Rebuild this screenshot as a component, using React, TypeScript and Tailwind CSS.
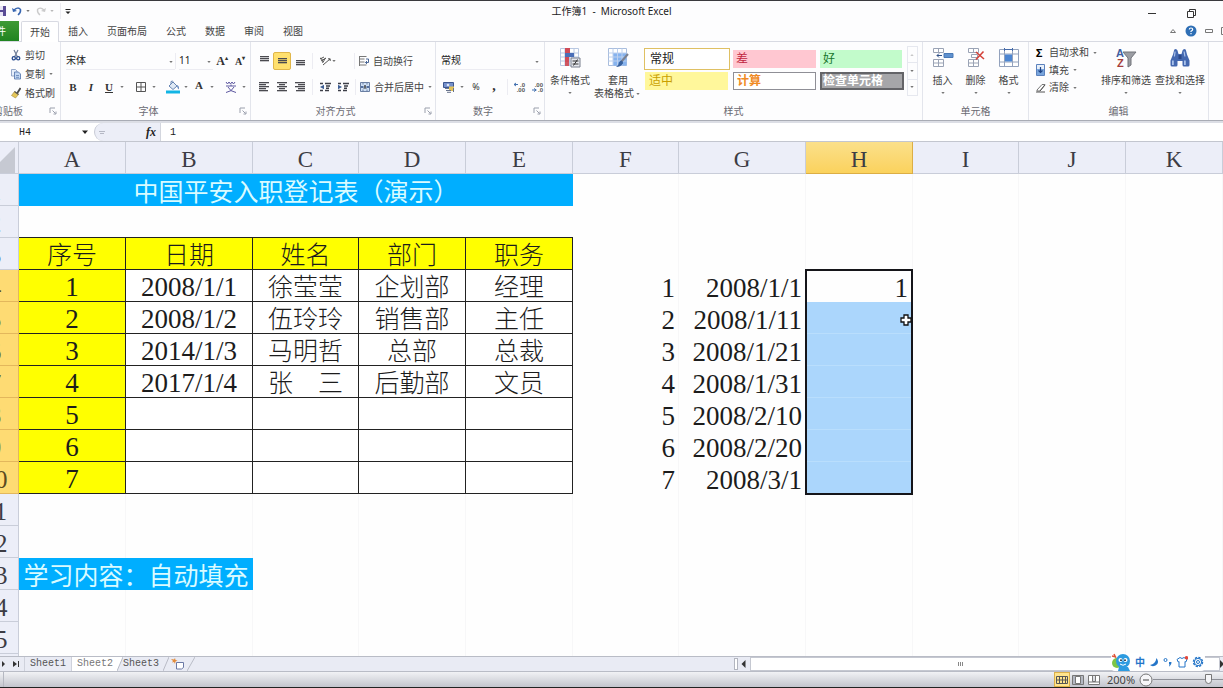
import type { ReactNode } from "react";

const ui = "font-['Noto_Sans','Noto_Sans_CJK_SC',sans-serif]";
const sheetFont = "font-['Liberation_Serif','Noto_Sans_CJK_SC',serif]";

function Dot({ className = "" }: { className?: string }) {
  return (
    <svg viewBox="0 0 8 8" className={`h-2 w-2 shrink-0 fill-[#777] ${className}`} aria-hidden="true">
      <path d="M2.300 3h3.400L4 5z" />
    </svg>
  );
}

function Launcher() {
  return (
    <svg viewBox="0 0 8 8" className="h-2 w-2" fill="none" stroke="#9a9fac" aria-hidden="true">
      <path d="M1 6V1h5M3.5 3.5l3 3M7 4.5V7H4.5" />
    </svg>
  );
}

function Group({ label, width, launcher, children, labelClass = "justify-center" }: { label: string; width: string; launcher?: boolean; children: ReactNode; labelClass?: string }) {
  return (
    <section aria-label={label} className={`flex shrink-0 flex-col border-r border-[#e3e5ec] ${width}`}>
      <div className="h-[61px]">{children}</div>
      <div className={`relative flex h-4 items-center text-[10px] leading-4 text-[#6a6a72] ${labelClass}`}>
        <span className="whitespace-nowrap">{label}</span>
        {launcher && (
          <button aria-label={`${label} 设置`} className="absolute right-[3px] top-1">
            <Launcher />
          </button>
        )}
      </div>
    </section>
  );
}

function Tool({ label, children, className = "" }: { label: string; children: ReactNode; className?: string }) {
  return (
    <button aria-label={label} className={`flex h-[18px] w-[18px] shrink-0 items-center justify-center text-[#333] ${className}`}>
      {children}
    </button>
  );
}

function Sep({ className = "" }: { className?: string }) {
  return <span className={`h-4 w-px shrink-0 bg-[#ececf2] ${className}`} />;
}

function Lines({ rows, y = 2 }: { rows: [number, number][]; y?: number }) {
  return (
    <svg viewBox="0 0 12 12" className="h-3 w-3" aria-hidden="true">
      {rows.map(([x, w], i) => (
        <rect key={i} x={x} y={y + i * 2} width={w} height="1.3" fill="#4a4a50" />
      ))}
    </svg>
  );
}

function Picker({ label, value, width }: { label: string; value: string; width: string }) {
  return (
    <span className={`relative flex h-[18px] items-center border-b border-[#ececf2] ${width}`}>
      <select aria-label={label} className="h-full w-full appearance-none bg-transparent text-[10px] text-[#222]">
        <option>{value}</option>
      </select>
      <Dot className="absolute right-0 top-1.5" />
    </span>
  );
}

function BigButton({ lines, width, arrow = "below", children }: { lines: string[]; width: string; arrow?: "below" | "inline"; children: ReactNode }) {
  return (
    <button className={`flex shrink-0 flex-col items-center pt-1 text-[10px] leading-[13px] text-[#444] ${width}`}>
      <span className="mb-1 flex h-6 items-center">{children}</span>
      <span className="whitespace-nowrap">{lines[0]}</span>
      {arrow === "below" ? (
        <Dot className="mt-0.5" />
      ) : (
        <span className="flex items-center whitespace-nowrap">
          {lines[1]}
          <Dot />
        </span>
      )}
    </button>
  );
}

function Indent({ flip }: { flip?: boolean }) {
  return (
    <svg viewBox="0 0 12 12" className="h-3 w-3" aria-hidden="true">
      <path d="M1 2.5h3M6 2.5h6M7 5h4M7 7.2h3M1 9.5h3M6 9.5h4" stroke="#3d3f48" strokeWidth="1.4" />
      <path d={flip ? "M1 3.8L5 6L1 8.2z" : "M5 3.8L1 6l4 2.2z"} fill="#3f5f95" />
    </svg>
  );
}

function Decimals({ top, bottom, left }: { top: string; bottom: string; left?: boolean }) {
  return (
    <svg viewBox="0 0 13 12" className="h-3 w-[13px]" aria-hidden="true">
      <text x="12" y="5.5" textAnchor="end" fontSize="6" fontWeight="700" fontFamily="Liberation Sans" fill="#555">{top}</text>
      <text x="12" y="11" textAnchor="end" fontSize="6" fontWeight="700" fontFamily="Liberation Sans" fill="#555">{bottom}</text>
      <path d={left ? "M1 3.5h4M3 2L1 3.5L3 5" : "M1 9h4M3 7.5L5.300 9L3 10.500"} fill="none" stroke="#4572b0" />
    </svg>
  );
}

function Clipboard() {
  return (
    <Group label="剪贴板" width="w-[61px]" launcher labelClass="justify-start -ml-[7px] mr-0">
      <div className="flex flex-col gap-px pl-[11px] pt-[4px] text-[10px] text-[#444]">
        <button className="flex h-[18px] items-center gap-1">
          <svg viewBox="0 0 10 12" className="h-3 w-2.5" fill="none" aria-hidden="true">
            <path d="M3 1l3.500 7M7 1L3.500 8" stroke="#6f7d98" strokeWidth="1.2" />
            <circle cx="2.800" cy="9.300" r="1.600" stroke="#274b8e" strokeWidth="1.300" />
            <circle cx="7.200" cy="9.300" r="1.600" stroke="#274b8e" strokeWidth="1.300" />
          </svg>
          剪切
        </button>
        <button className="flex h-[18px] items-center gap-1">
          <svg viewBox="0 0 10 12" className="h-3 w-2.5" aria-hidden="true">
            <path d="M.5 1.500h4l1.500 1.500v5h-5.500z" fill="#e7effa" stroke="#7d95bd" strokeWidth=".8" />
            <path d="M3.500 4h4l2 2v5h-6z" fill="#c3d8f3" stroke="#4f71a8" strokeWidth=".8" />
            <path d="M5 7.500h3M5 9.300h3" stroke="#4f71a8" strokeWidth=".7" />
          </svg>
          复制
          <Dot className="-ml-0.5" />
        </button>
        <button className="flex h-[18px] items-center gap-1 whitespace-nowrap">
          <svg viewBox="0 0 10 12" className="h-3 w-2.5" aria-hidden="true">
            <path d="M9.500 1L6 6.500" stroke="#4a4a4a" strokeWidth="1.800" />
            <path d="M3.500 4.500l4 3-3 3.500-4-2.500z" fill="#e5c75a" stroke="#a38a35" strokeWidth=".6" />
            <path d="M3.500 4.500l4 3" stroke="#555" strokeWidth="1.300" />
          </svg>
          格式刷
        </button>
      </div>
    </Group>
  );
}

function FontGroup() {
  return (
    <Group label="字体" width="w-[190px]" launcher labelClass="justify-center pr-[14px]">
      <div className="flex items-center pl-[5px] pt-[10px]">
        <Picker label="字体" value="宋体" width="w-[109px]" />
        <Sep className="mr-[3px]" />
        <Picker label="字号" value="11" width="w-[34px]" />
        <Tool label="增大字号" className="font-['Liberation_Serif'] text-[12px] font-bold">A<sup className="text-[6px]">▴</sup></Tool>
        <Tool label="减小字号" className="font-['Liberation_Serif'] text-[10px] font-bold">A<sup className="text-[6px]">▾</sup></Tool>
      </div>
      <div className="flex items-center pl-[3px] pt-[8px] font-['Liberation_Serif']">
        <Tool label="加粗" className="text-[11px] font-bold">B</Tool>
        <Tool label="倾斜" className="text-[11px] font-bold italic">I</Tool>
        <Tool label="下划线" className="text-[11px] font-bold underline">U</Tool>
        <Dot className="mr-[6px]" />
        <Tool label="边框">
          <svg viewBox="0 0 12 12" className="h-3 w-3" fill="none" stroke="#555" aria-hidden="true"><path d="M1.500 1.500h9v9h-9zM6 1.500v9M1.500 6h9" /></svg>
        </Tool>
        <Dot className="mr-[6px]" />
        <Tool label="填充颜色">
          <svg viewBox="0 0 14 14" className="h-3.5 w-3.5" aria-hidden="true">
            <path d="M3 6l4-4 4 4-4 3.500z" fill="#dfe9f5" stroke="#6685b3" />
            <path d="M5 4V1.500q1.500-1 2.500.500" fill="none" stroke="#6685b3" />
            <path d="M11 5q2.500 1 1.500 4.500Q11.500 8 11 5z" fill="#2e5fa8" />
            <path d="M0 10.500h14v3H0z" fill="#12b5e5" />
          </svg>
        </Tool>
        <Dot />
        <Tool label="字体颜色" className="pb-1 text-[11px] font-bold text-[#3d4f75]">A</Tool>
        <Dot className="mr-[6px]" />
        <Tool label="拼音">
          <svg viewBox="0 0 12 13" className="h-3.5 w-3" fill="none" stroke="#5d58a0" aria-hidden="true"><path d="M1 1.500l1.500 2L4 1.500l1.500 2L7 1.500l1.500 2L10 1.500M1 5.500h10M6 4v1.500M3 6.500Q5 11 11 12M9 6.500Q7 11 1 12" /></svg>
        </Tool>
        <Dot />
      </div>
    </Group>
  );
}

const left: [number, number][] = [[1, 10], [1, 7], [1, 10], [1, 7], [1, 9]];
const center: [number, number][] = [[1, 10], [3, 6], [1, 10], [3, 6], [1, 10]];
const right: [number, number][] = [[1, 10], [4, 7], [1, 10], [4, 7], [2, 9]];
const bars: [number, number][] = [[2, 9], [2, 9], [2, 9]];

function AlignGroup() {
  return (
    <Group label="对齐方式" width="w-[185px]" launcher labelClass="justify-center pr-[15px]">
      <div className="flex items-center pl-1 pt-[10px]">
        <Tool label="顶端对齐"><Lines rows={bars} y={1} /></Tool>
        <Tool label="垂直居中" className="rounded-xs border border-[#e0b64a] bg-[#ffe06e]"><Lines rows={bars} y={3} /></Tool>
        <Tool label="底端对齐"><Lines rows={bars} y={5} /></Tool>
        <Sep className="ml-[3px] mr-[3px]" />
        <Tool label="方向">
          <svg viewBox="0 0 12 12" className="h-3 w-3" fill="none" stroke="#555" aria-hidden="true">
            <path d="M1 4l4-2M2 6l5-3M3.500 8l3-5M4 10l7-6M9 3.800h2.200V6M1 3q2 0 3 4" />
          </svg>
        </Tool>
        <Dot className="-ml-1" />
        <Sep className="ml-[16px] mr-[4px]" />
        <button className="flex h-[18px] items-center gap-1 text-[10px] text-[#444]">
          <svg viewBox="0 0 10 12" className="h-3 w-2.5" fill="none" aria-hidden="true">
            <path d="M.5 1.500h7M.5 4h5M.5 7h5M.5 10h7M.5 1v10" stroke="#777" /><path d="M7 4h2.500v3.500H6.500M8 6L6.500 7.500L8 9" stroke="#4b6796" />
          </svg>
          自动换行
        </button>
      </div>
      <div className="flex items-center pl-1 pt-[8px]">
        <Tool label="左对齐"><Lines rows={left} y={1} /></Tool>
        <Tool label="居中"><Lines rows={center} y={1} /></Tool>
        <Tool label="右对齐"><Lines rows={right} y={1} /></Tool>
        <Sep className="ml-[3px] mr-[3px]" />
        <Tool label="减少缩进量"><Indent /></Tool>
        <Tool label="增加缩进量"><Indent flip /></Tool>
        <Sep className="ml-[3px] mr-[4px]" />
        <button className="flex h-[18px] items-center gap-1 whitespace-nowrap text-[10px] text-[#444]">
          <svg viewBox="0 0 10 12" className="h-3 w-2.5" aria-hidden="true">
            <path d="M.5 1.500h9v9h-9z" fill="#cfe0f5" stroke="#6a7fa3" />
            <path d="M3 1.500v2M7 1.500v2M3 8.500v2M7 8.500v2" stroke="#6a7fa3" />
            <path d="M1 6h2.500M9 6H6.500" stroke="#2c4b85" strokeWidth="1.300" /><path d="M4 8l1-4 1 4" fill="none" stroke="#333" strokeWidth=".8" />
          </svg>
          <span>合并后居中</span>
          <Dot className="-ml-0.5" />
        </button>
      </div>
    </Group>
  );
}

function NumberGroup() {
  return (
    <Group label="数字" width="w-[109px]" launcher labelClass="justify-center pr-[14px]">
      <div className="pl-[5px] pt-[10px]"><Picker label="数字格式" value="常规" width="w-[100px]" /></div>
      <div className="flex items-center pl-1 pt-[8px]">
        <Tool label="会计数字格式">
          <svg viewBox="0 0 12 12" className="h-3 w-3" aria-hidden="true">
            <path d="M.5 1.500h10v5H.5z" fill="#7590cb" stroke="#3d568f" /><circle cx="5" cy="4" r="1.300" fill="#dfe7f7" />
            <path d="M6 5.500h5v4.500H6z" fill="#e2c25a" /><path d="M2 7.500h4M3 9.500h5M4 11.300h4M10.500 7v4" stroke="#68738c" />
          </svg>
        </Tool>
        <Dot className="mr-px" />
        <Tool label="百分比" className="text-[9px]">%</Tool>
        <Tool label="千位分隔" className="pb-1 font-['Liberation_Serif'] text-[14px] font-bold">,</Tool>
        <Sep className="ml-1 mr-[2px]" />
        <Tool label="增加小数位数"><Decimals top=".0" bottom=".00" left /></Tool>
        <Tool label="减少小数位数"><Decimals top=".00" bottom=".0" /></Tool>
      </div>
    </Group>
  );
}

const styles = [
  { name: "常规", cls: "border border-[#dfc063] bg-white text-[#222] pl-[5px]" },
  { name: "差", cls: "my-0.5 mx-[3px] bg-[#ffc7d1] text-[#c02540] pl-[3px]" },
  { name: "好", cls: "my-0.5 mr-0.5 ml-px bg-[#c2fbcb] text-[#17762b] pl-[3px]" },
  { name: "适中", cls: "my-0.5 ml-px mr-0.5 bg-[#fff79b] text-[#c9a000] pl-[4px]" },
  { name: "计算", cls: "my-0.5 mx-[3px] border border-[#8f8f96] bg-white text-[#f08a24] font-bold pl-[3px]" },
  { name: "检查单元格", cls: "my-0.5 ml-px border-2 border-[#646468] bg-[#a6a6a9] text-white font-bold pl-px" },
];

function StylesGroup() {
  return (
    <Group label="样式" width="w-[378px]">
      <div className="flex">
        <BigButton lines={["条件格式"]} width="w-[50px]">
          <svg viewBox="0 0 22 20" className="h-5 w-[22px]" aria-hidden="true">
            <path d="M1.500.500h18v17h-18zM6 .500v17M10.500.500v17M15 .500v17M1.500 5h18M1.500 9h18M1.500 13h18" fill="#fff" stroke="#b9c8e2" />
            <path d="M6 0h5v5H6zM6 9h4v5H6z" fill="#cf4b58" /><path d="M6 5h9v4H6z" fill="#4a6fb8" /><path d="M6 14h4v4H6z" fill="#ce5661" />
            <path d="M12 10h9v9h-9z" fill="#e6e8ee" stroke="#797f8c" /><path d="M13.500 13h6M13.500 16h6M18.500 11.500l-4 6" stroke="#333" />
          </svg>
        </BigButton>
        <BigButton lines={["套用", "表格格式"]} arrow="inline" width="w-[46px]">
          <svg viewBox="0 0 22 20" className="h-5 w-[22px]" aria-hidden="true">
            <path d="M1.500.500h18v17h-18z" fill="#fff" stroke="#a9bddd" /><path d="M6 5h13.500v12.500H6z" fill="#86b3ee" />
            <path d="M6 .500v17M10.500.500v17M15 .500v17M1.500 5h18M1.500 9h18M1.500 13h18" stroke="#bcd0ee" />
            <path d="M21 6l-7 8" stroke="#7b8190" strokeWidth="2" /><path d="M14.500 12.500q2 1 1.500 3-2.500 3.500-7 3.500 3-2 3-4.500 1-2 2.500-2z" fill="#38629f" />
          </svg>
        </BigButton>
        <div className="grid grid-cols-[86px_89px_85px] grid-rows-[22px_22px] pl-[3px] pt-[6px]">
          {styles.map((s) => (
            <button key={s.name} className={`flex items-center whitespace-nowrap text-left text-[12px] leading-4 ${s.cls}`}>{s.name}</button>
          ))}
        </div>
        <div className="ml-[3px] mt-1 flex h-[50px] w-[11px] flex-col divide-y divide-[#e6e8ef] border border-[#e6e8ef]">
          <button aria-label="向上" className="flex flex-1 items-center"><Dot className="rotate-180 opacity-40" /></button>
          <button aria-label="向下" className="flex flex-1 items-center"><Dot /></button>
          <button aria-label="更多" className="flex flex-1 items-center"><Dot /></button>
        </div>
      </div>
    </Group>
  );
}

function CellsGroup() {
  return (
    <Group label="单元格" width="w-[106px]">
      <div className="flex pl-[3px]">
        <BigButton lines={["插入"]} width="w-[33px]">
          <svg viewBox="0 0 22 20" className="h-5 w-[22px]" fill="#fff" stroke="#9aa3b5" aria-hidden="true">
            <path d="M1.500.500h10v4h-10zM6.500.500v4M1.500 11.500h10v7h-10zM6.500 11.500v7M1.500 15h10" /><path d="M12 5.500h9v4h-9z" fill="#5f91cf" stroke="#4a79b5" /><path d="M5 7.500h5M7 5.500L5 7.500l2 2" fill="none" stroke="#2e4f86" />
          </svg>
        </BigButton>
        <BigButton lines={["删除"]} width="w-[33px]">
          <svg viewBox="0 0 22 20" className="h-5 w-[22px]" fill="#fff" stroke="#9aa3b5" aria-hidden="true">
            <path d="M3.500.500h10v4h-10zM8.500.500v4M3.500 11.500h10v7h-10zM8.500 11.500v7M3.500 15h10M6.500 6.500h6v3h-6z" /><path d="M11 4l8 7M18.500 3.500L11 11.500" stroke="#d4423a" strokeWidth="1.600" />
          </svg>
        </BigButton>
        <BigButton lines={["格式"]} width="w-[33px]">
          <svg viewBox="0 0 22 20" className="h-5 w-[22px]" fill="#fff" stroke="#93a2bd" aria-hidden="true">
            <path d="M1.500 1.500h19v17h-19zM6.500 1.500v17M14.500 1.500v17M1.500 6h19M1.500 14h19" /><path d="M7 6.500h7v7H7z" fill="#4d86d2" stroke="none" /><path d="M6.500 0v3M14.500 0v3M6.500 1.500h8" stroke="#456aa8" />
          </svg>
        </BigButton>
      </div>
    </Group>
  );
}

function EditGroup() {
  return (
    <Group label="编辑" width="w-[180px]">
      <div className="flex">
        <div className="flex w-[70px] flex-col pl-[7px] pt-[2px] text-[10px] text-[#444]">
          <button className="flex h-[17px] items-center whitespace-nowrap"><span className="w-[13px] text-left text-[11px] font-bold leading-4 text-black">Σ</span>自动求和<Dot className="ml-0.5" /></button>
          <button className="flex h-[18px] items-center whitespace-nowrap">
            <svg viewBox="0 0 10 12" className="mr-[3px] h-3 w-2.5" aria-hidden="true"><path d="M.5.500h8v11h-8z" fill="#e6effa" stroke="#5c82bd" /><path d="M1 5h7v6H1z" fill="#79a5dc" /><path d="M4.500 3v5M2.500 6.500l2 2 2-2" fill="none" stroke="#1f4485" strokeWidth="1.200" /></svg>
            填充<Dot className="ml-0.5" />
          </button>
          <button className="flex h-[17px] items-center whitespace-nowrap">
            <svg viewBox="0 0 10 10" className="mr-[3px] h-2.5 w-2.5" aria-hidden="true"><path d="M1 7l5-5.500h3L4 8H1z" fill="#fff" stroke="#777" /><path d="M0 9h9M4 8l5-6" stroke="#555" /></svg>
            清除<Dot className="ml-0.5" />
          </button>
        </div>
        <BigButton lines={["排序和筛选"]} width="w-[54px]">
          <svg viewBox="0 0 22 20" className="h-5 w-[22px]" aria-hidden="true">
            <path d="M8 4h13l-5 6v7l-3 2v-9z" fill="#9b9da3" stroke="#72747b" />
            <text x="1" y="9" fontSize="11" fontWeight="700" fontFamily="Liberation Sans" fill="#3f5ea0">A</text>
            <text x="2" y="19" fontSize="11" fontWeight="700" fontFamily="Liberation Sans" fill="#a63f3c">Z</text>
          </svg>
        </BigButton>
        <BigButton lines={["查找和选择"]} width="w-[54px]">
          <svg viewBox="0 0 22 20" className="h-5 w-[22px]" aria-hidden="true">
            <path d="M5 2.500q0-1.500 1.500-1.500T8.500 2.500L9.500 6h3l1-3.500Q14 1 15.500 1T17 2.500l1 4 2.500 6V17q0 1.500-1.500 1.500h-4Q13.500 18.500 13.500 17v-4h-5v4q0 1.500-1.500 1.500H3Q1.500 18.500 1.500 17v-4.500L4 6.500z" fill="#4468b0" />
            <path d="M5.500 3.500h1.200L6 8.500H4.800zM14.500 3.500h1.200l.8 5h-1.200zM3 12.500h1.800V17H3zM15 12.500h1.800V17H15z" fill="#a9c1ea" /><path d="M9.500 7h3v4h-3z" fill="#2a4787" />
          </svg>
        </BigButton>
      </div>
    </Group>
  );
}

const tabs = ["插入", "页面布局", "公式", "数据", "审阅", "视图"];

function TitleBar() {
  return (
    <header className="relative flex h-5 items-center justify-between">
      <div className="flex items-center">
        <button aria-label="保存" className="w-[6px] overflow-hidden">
          <svg viewBox="0 0 10 10" className="-ml-1 h-2.5 w-2.5" aria-hidden="true"><path d="M0 0h10v10H0z" fill="#5a4c96" /><path d="M2 0h5v4H2zM3 6h4v4H3z" fill="#e8e5f5" /></svg>
        </button>
        <button aria-label="撤消" className="ml-1.5 flex items-center">
          <svg viewBox="0 0 10 10" className="h-2.5 w-2.5" fill="none" aria-hidden="true"><path d="M2 4q4-3.500 6.500-.500Q9 6.500 6 9" stroke="#3765b0" strokeWidth="1.500" /><path d="M0 2l1 4 4-1z" fill="#3765b0" /></svg>
          <Dot className="ml-0.5" />
        </button>
        <button aria-label="恢复" className="ml-1 flex items-center opacity-50">
          <svg viewBox="0 0 10 10" className="h-2.5 w-2.5" fill="none" aria-hidden="true"><path d="M8 4Q4 .500 1.500 3.500 1 6.500 4 9" stroke="#999" strokeWidth="1.300" /><path d="M10 2L9 6 5 5z" fill="#999" /></svg>
          <Dot className="ml-0.5" />
        </button>
        <Sep className="mx-1 bg-[#c9cbd2]" />
        <button aria-label="自定义快速访问工具栏">
          <svg viewBox="0 0 6 7" className="h-[7px] w-1.5 fill-[#222]" aria-hidden="true"><path d="M.5 1h5v1h-5zM.5 3.500h5L3 6z" /></svg>
        </button>
      </div>
      <h1 className="absolute inset-x-0 text-center text-[10px] leading-5 text-[#222]">工作簿1&nbsp; -&nbsp; Microsoft Excel</h1>
      <div className="relative flex items-center gap-[30px] pr-[27px] pt-[3px]">
        <button aria-label="最小化"><svg viewBox="0 0 8 8" className="h-2 w-2" stroke="#333" aria-hidden="true"><path d="M0 4.500h8" /></svg></button>
        <button aria-label="还原"><svg viewBox="0 0 10 10" className="h-2.5 w-2.5" fill="none" stroke="#333" aria-hidden="true"><path d="M1.500 3.500h6v6h-6zM3.500 3.500v-2h6v6h-2" /></svg></button>
      </div>
    </header>
  );
}

function TabRow() {
  return (
    <nav className="flex h-[21px] items-center border-b border-[#d8dae2] text-[10px] text-[#444]">
      <button className="flex h-full w-[19px] items-center overflow-hidden bg-linear-to-b from-[#3f9a35] to-[#1f8420] text-white">
        <span className="-ml-[14px] whitespace-nowrap">文件</span>
      </button>
      <button className="-mb-px ml-0.5 h-[21px] w-[38px] self-end rounded-t-xs border border-b-0 border-[#d8dae2] bg-white">开始</button>
      <div className="ml-[9px] flex gap-[19px]">
        {tabs.map((t) => <button key={t}>{t}</button>)}
      </div>
      <div className="ml-auto flex items-center gap-2">
        <button aria-label="折叠功能区"><svg viewBox="0 0 8 8" className="h-2 w-2" fill="none" stroke="#777" aria-hidden="true"><path d="M1.500 5.500L4 2.500l2.500 3z" /></svg></button>
        <button aria-label="帮助">
          <svg viewBox="0 0 12 12" className="h-3 w-3" aria-hidden="true"><circle cx="6" cy="6" r="5.500" fill="#2f6fb5" /><path d="M4.300 4.600Q4.300 3 6 3t1.700 1.500Q7.700 5.500 6 6.300V7" fill="none" stroke="#fff" strokeWidth="1.200" /><path d="M5.400 8h1.200v1.200H5.400z" fill="#fff" /></svg>
        </button>
        <button aria-label="窗口最小化"><svg viewBox="0 0 8 4" className="h-1 w-2" fill="none" stroke="#777" aria-hidden="true"><path d="M.5.500h7v3h-7z" /></svg></button>
        <button aria-label="还原窗口" className="w-0.5 overflow-hidden"><svg viewBox="0 0 8 8" className="h-2 w-2" fill="none" stroke="#777" aria-hidden="true"><path d="M.5.500h7v7h-7z" /></svg></button>
      </div>
    </nav>
  );
}

function FormulaBar() {
  return (
    <div className="flex h-[19px] shrink-0 items-center border-b border-[#c3c6cf] bg-white text-[10px] text-[#222]">
      <input aria-label="名称框" defaultValue="H4" className="h-full w-[76px] bg-transparent pl-[19px] font-['Liberation_Mono','Noto_Sans_CJK_SC',monospace] text-[10px]" />
      <button aria-label="名称列表" className="w-[18px]"><svg viewBox="0 0 8 8" className="mx-auto h-2 w-2 fill-[#222]" aria-hidden="true"><path d="M1 2.500h6L4 6z" /></svg></button>
      <span className="flex h-full w-[66px] items-center justify-between rounded-l-full border-l border-[#c7cad5] bg-[#eceef7] pl-1 pr-1 font-['Liberation_Serif'] text-[12px] font-bold italic">
        <svg viewBox="0 0 6 6" className="h-1.5 w-1.5" stroke="#b5b8c4" aria-hidden="true"><path d="M0 2.500h6M1 4.500h4" /></svg>
        fx
      </span>
      <input aria-label="编辑栏" defaultValue="1" className="h-full min-w-0 flex-1 border-l border-[#d3d6de] pl-[9px] font-['Liberation_Mono','Noto_Sans_CJK_SC',monospace] text-[10px]" />
    </div>
  );
}

const columns = ["A", "B", "C", "D", "E", "F", "G", "H", "I", "J", "K"];
const staff = [
  ["1", "2008/1/1", "徐莹莹", "企划部", "经理"],
  ["2", "2008/1/2", "伍玲玲", "销售部", "主任"],
  ["3", "2014/1/3", "马明哲", "总部", "总裁"],
  ["4", "2017/1/4", "张　三", "后勤部", "文员"],
  ["5", "", "", "", ""],
  ["6", "", "", "", ""],
  ["7", "", "", "", ""],
];
const dates = ["2008/1/1", "2008/1/11", "2008/1/21", "2008/1/31", "2008/2/10", "2008/2/20", "2008/3/1"];
const heads = ["序号", "日期", "姓名", "部门", "职务"];
const boxed = "border-b border-r border-[#222]";
const plain = "border-r border-[#f7f7f8]";

function Blank({ count }: { count: number }) {
  return <>{Array.from({ length: count }, (_, i) => <td key={i} className={plain} />)}</>;
}

function RowHead({ n, on }: { n: number; on?: boolean }) {
  return (
    <th scope="row" className={`border-b border-r text-center font-normal ${on ? "border-[#e3b75c] bg-[#fedb73] text-[#5a4a20]" : "border-[#c9cdd9] bg-[#eceef8] text-[#3c3c44]"}`}>
      {n}
    </th>
  );
}

function Sheet() {
  return (
    <main className="min-h-0 flex-1 basis-0 overflow-hidden bg-[#fefefe]">
      <div className={`-ml-[28px] ${sheetFont}`}>
        <table className="w-full table-fixed border-separate border-spacing-0 text-[25px] leading-[27px] text-[#1c1c1c] [&_td]:p-0 [&_td]:pt-1 [&_th]:p-0 [&_th]:pt-1 [&_tr]:h-8">
          <colgroup>
            <col className="w-[47px]" /><col className="w-[107px]" /><col className="w-[127px]" /><col className="w-[106px]" /><col className="w-[107px]" /><col className="w-[107px]" />
            <col className="w-[106px]" /><col className="w-[127px]" /><col className="w-[107px]" /><col className="w-[106px]" /><col className="w-[107px]" /><col />
          </colgroup>
          <thead>
            <tr className="text-[23px] text-[#3c3c44]">
              <td className="border-b border-r border-[#c9cdd9] bg-[#eceef8] align-bottom">
                <svg viewBox="0 0 27 27" className="ml-auto mr-[3px] h-[26px] w-[26px]" aria-hidden="true"><path d="M27 0v27H0z" fill="#c6c9d2" /></svg>
              </td>
              {columns.map((c) => (
                <th key={c} scope="col" className={`border-b border-r font-normal ${c === "H" ? "border-[#dcae45] bg-linear-to-b from-[#fbe08a] to-[#fbd25c]" : "border-[#c9cdd9] bg-[#eceef8]"}`}>{c}</th>
              ))}
            </tr>
          </thead>
          <tbody>
            <tr>
              <RowHead n={1} />
              <td colSpan={5} className="bg-[#00aeff] text-center text-[#d9fbff]">中国平安入职登记表（演示）</td>
              <Blank count={6} />
            </tr>
            <tr>
              <RowHead n={2} />
              {heads.map((h) => <td key={h} className="border-b border-[#222]" />)}
              <Blank count={6} />
            </tr>
            <tr>
              <RowHead n={3} />
              {heads.map((h) => <td key={h} className={`bg-[#ffff00] text-center font-light ${boxed}`}>{h}</td>)}
              <Blank count={6} />
            </tr>
            {staff.map((row, r) => (
              <tr key={row[0]}>
                <RowHead n={r + 4} on />
                {row.map((v, c) => (
                  <td key={c} className={`text-center font-light ${boxed} ${c < 2 ? "text-[27px]" : ""} ${c === 0 ? "bg-[#ffff00]" : "bg-white"}`}>{v}</td>
                ))}
                <td className={`text-right text-[27px] ${plain}`}><span className="pr-[3px]">{r + 1}</span></td>
                <td className={`text-right text-[27px] ${plain}`}><span className="pr-[3px]">{dates[r]}</span></td>
                {r === 0 ? (
                  <td className="relative text-right text-[27px]">
                    <span className="pr-[5px]">1</span>
                    <span className="pointer-events-none absolute -left-px -top-px z-10 h-[226px] w-[108px] border-2 border-[#15151a]" />
                    <svg viewBox="0 0 12 12" className="absolute -bottom-6 right-px z-20 h-3 w-3" aria-hidden="true"><path d="M4 1h4v3h3v4H8v3H4V8H1V4h3z" fill="#fff" stroke="#111" strokeWidth="1.300" /></svg>
                  </td>
                ) : (
                  <td className={r === 6 ? "bg-[#abd6fc]" : "border-b border-[#b9defd] bg-[#abd6fc]"} />
                )}
                <Blank count={3} />
              </tr>
            ))}
            {[11, 12].map((n) => <tr key={n}><RowHead n={n} /><Blank count={11} /></tr>)}
            <tr>
              <RowHead n={13} />
              <td colSpan={2} className="whitespace-nowrap bg-[#00aeff] text-center text-[#d9fbff]">学习内容：自动填充</td>
              <Blank count={9} />
            </tr>
            {[14, 15, 16].map((n) => <tr key={n}><RowHead n={n} /><Blank count={11} /></tr>)}
          </tbody>
        </table>
      </div>
    </main>
  );
}

function InputStrip() {
  return (
    <div className="absolute bottom-0 right-[18px] flex h-[18px] items-center gap-[4px] rounded-sm bg-white pr-px text-[#2475c8]">
      <svg viewBox="0 0 20 18" className="h-[18px] w-5" aria-hidden="true">
        <circle cx="6" cy="10" r="5" fill="#7cc548" /><path d="M1 3l4 1M3 1l2 4" stroke="#e0563a" strokeWidth="1.500" />
        <circle cx="12" cy="8" r="7" fill="#2d9be0" /><circle cx="9.500" cy="7" r="2" fill="#fff" /><circle cx="14.500" cy="7" r="2" fill="#fff" />
        <circle cx="10" cy="7.200" r=".9" fill="#123" /><circle cx="14" cy="7.200" r=".9" fill="#123" /><path d="M9 11q3 2.500 6 0" stroke="#fff" fill="none" /><path d="M8 14h9l2 4H7z" fill="#2d9be0" />
      </svg>
      <button className="font-['Noto_Sans_CJK_SC'] text-[10px] font-bold leading-4">中</button>
      <svg viewBox="0 0 10 10" className="h-2.5 w-2.5" aria-hidden="true"><path d="M7.500 1Q11 6 6.500 8.500 3 10 1 8 6.500 7 7.500 1z" fill="#2475c8" /></svg>
      <svg viewBox="0 0 9 10" className="h-2.5 w-[9px]" aria-hidden="true"><circle cx="2.500" cy="3" r="1.500" fill="none" stroke="#2475c8" /><path d="M6 5h2.500q.300 2.500-2 4.500L6 9l.8-1.500H6z" fill="#2475c8" /></svg>
      <svg viewBox="0 0 12 12" className="h-3 w-3" fill="none" aria-hidden="true"><path d="M4 1.500q2 2 4 0l3 2-1.200 2.500L9 5.500v5.500H3V5.500l-.8.500L1 3.500z" stroke="#2475c8" /><circle cx="10.500" cy="1.800" r="1.800" fill="#e5483b" /></svg>
      <svg viewBox="0 0 12 12" className="h-3 w-3" fill="none" stroke="#2475c8" aria-hidden="true"><circle cx="6" cy="6" r="4.500" strokeWidth="1.500" strokeDasharray="2.300 1.200" /><circle cx="6" cy="6" r="3.600" /><circle cx="6" cy="6" r="1.500" /></svg>
    </div>
  );
}

function SheetTabs() {
  return (
    <div className="relative flex h-4 shrink-0 items-center border-y border-[#b9bcc6] bg-[#e9ebf4] font-['Liberation_Mono',monospace] text-[10px] leading-[14px] text-[#555]">
      <button aria-label="下一张"><svg viewBox="0 0 6 8" className="h-2 w-1.5 fill-[#333]" aria-hidden="true"><path d="M2 1l3 3-3 3z" /></svg></button>
      <button aria-label="最后一张" className="ml-[6px]"><svg viewBox="0 0 8 8" className="h-2 w-2 fill-[#333]" aria-hidden="true"><path d="M1 1l4 3-4 3zM6 1h1v6H6z" /></svg></button>
      <button className="ml-1 h-full border-x border-[#cfd2dc] px-[5px]">Sheet1</button>
      <button className="h-full bg-white pl-[5px] pr-1 text-[#777]">Sheet2</button>
      <svg viewBox="0 0 6 14" className="h-3.5 w-1.5" aria-hidden="true"><path d="M0 0h6L0 14z" fill="#fff" /><path d="M6 0L0 14" stroke="#b9bcc6" /></svg>
      <button className="h-full">Sheet3</button>
      <svg viewBox="0 0 6 14" className="ml-1 h-3.5 w-1.5" aria-hidden="true"><path d="M6 0L0 14" stroke="#b9bcc6" /></svg>
      <button aria-label="插入工作表" className="ml-0.5">
        <svg viewBox="0 0 14 12" className="h-3 w-3.5" aria-hidden="true"><path d="M5.500 4.500h7v5l-2 1.500h-5z" fill="#fff" stroke="#6b79a5" /><path d="M0 1l3 .500L4 0l.5 2 2 .500-2 1L4 6 3 4 1 4.500 2 3z" fill="#e28b3c" /></svg>
      </button>
      <svg viewBox="0 0 8 14" className="ml-0.5 h-3.5 w-2" aria-hidden="true"><path d="M8 0L0 14" stroke="#b9bcc6" /></svg>
      <div className="ml-auto flex h-full w-[40%] items-center">
        <span className="h-3 w-1 border border-[#b2b5bf] bg-white" />
        <button aria-label="向左滚动" className="mx-0.5"><svg viewBox="0 0 8 8" className="h-2 w-2 fill-[#333]" aria-hidden="true"><path d="M5.500 0v8L1.500 4z" /></svg></button>
        <div className="flex h-full flex-1 items-center border border-[#c5c8d1] bg-white">
          <svg viewBox="0 0 6 6" className="ml-[44%] h-1.5 w-1.5" stroke="#888" aria-hidden="true"><path d="M1.500 1v4M3.500 1v4M5.500 1v4" /></svg>
        </div>
        <button aria-label="向右滚动" className="w-[3px] overflow-hidden"><svg viewBox="0 0 8 8" className="h-2 w-2 fill-[#333]" aria-hidden="true"><path d="M0 0v8l4-4z" /></svg></button>
      </div>
      <InputStrip />
    </div>
  );
}

function StatusBar() {
  return (
    <footer className="flex h-4 shrink-0 items-center justify-end overflow-hidden border-b border-[#222] bg-linear-to-b from-[#f1f2f5] to-[#c3c5cd] text-[11px] leading-4 text-[#444]">
      <span className="ml-[3px] mr-auto h-full w-px bg-[#b5b8c1]" />
      <button aria-label="普通视图" className="flex h-full w-4 items-center justify-center border border-[#dcb04a] bg-[#ffe48c]"><svg viewBox="0 0 12 10" className="h-2.5 w-3" fill="none" stroke="#555" aria-hidden="true"><path d="M.5 1.500h11v7H.5zM.5 5h11M3.500 1.500v7M6.500 1.500v7M9.500 1.500v7" /></svg></button>
      <button aria-label="页面布局视图" className="flex w-4 justify-center"><svg viewBox="0 0 12 10" className="h-2.5 w-3" fill="#fff" stroke="#777" aria-hidden="true"><path d="M.5.500h11v9H.5z" fill="#b4b8c2" /><path d="M3.500 1.500h5v7h-5z" /></svg></button>
      <button aria-label="分页预览" className="flex w-4 justify-center"><svg viewBox="0 0 12 10" className="h-2.5 w-3" fill="#fff" stroke="#777" aria-hidden="true"><path d="M.5.500h11v9H.5zM4.500.500v6h3v-6M.5 7h11" /></svg></button>
      <span className="ml-[5px] w-8">200%</span>
      <button aria-label="缩小"><svg viewBox="0 0 14 14" className="h-3.5 w-3.5" aria-hidden="true"><circle cx="7" cy="7" r="6" fill="#f7f7f9" stroke="#777" /><path d="M4 7h6" stroke="#444" /></svg></button>
      <input type="range" aria-label="显示比例" min={0} max={100} defaultValue={52} className="-mr-[37px] h-4 w-[107px] shrink-0 appearance-none bg-transparent [&::-webkit-slider-runnable-track]:h-px [&::-webkit-slider-runnable-track]:bg-[#8d8f97] [&::-webkit-slider-thumb]:-mt-[5px] [&::-webkit-slider-thumb]:h-[10px] [&::-webkit-slider-thumb]:w-[7px] [&::-webkit-slider-thumb]:appearance-none [&::-webkit-slider-thumb]:rounded-b-sm [&::-webkit-slider-thumb]:border [&::-webkit-slider-thumb]:border-[#777] [&::-webkit-slider-thumb]:bg-[#f5f5f8]" />
    </footer>
  );
}

export default function App() {
  return (
    <div className={`flex h-screen flex-col overflow-hidden border-t border-[#3a3a3e] bg-[#fdfdfe] ${ui}`}>
      <TitleBar />
      <TabRow />
      <div className="flex h-[78px] shrink-0 overflow-hidden">
        <Clipboard />
        <FontGroup />
        <AlignGroup />
        <NumberGroup />
        <StylesGroup />
        <CellsGroup />
        <EditGroup />
      </div>
      <div className="h-[3px] shrink-0 border-t border-[#a9acb5] bg-[#dcdee5]" />
      <FormulaBar />
      <Sheet />
      <SheetTabs />
      <StatusBar />
    </div>
  );
}
